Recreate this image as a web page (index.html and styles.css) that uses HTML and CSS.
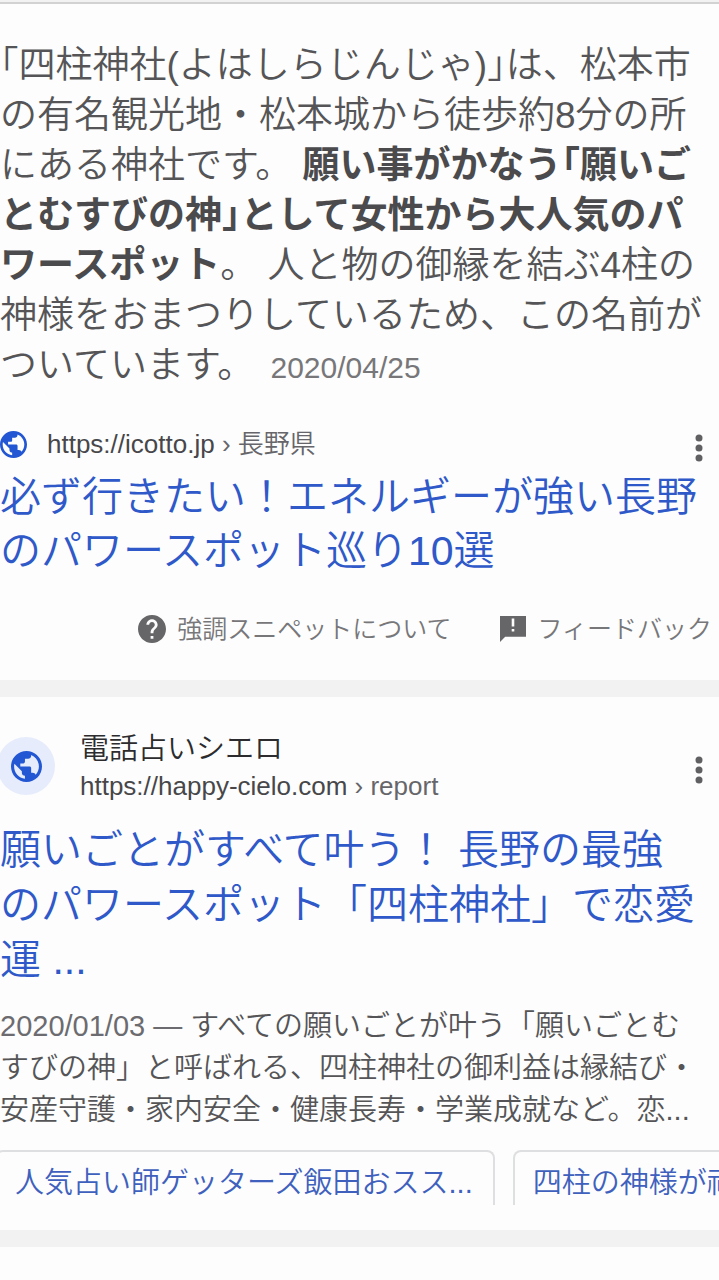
FILE: index.html
```
<!DOCTYPE html>
<html lang="ja">
<head>
<meta charset="utf-8">
<meta name="viewport" content="width=device-width">
<title>四柱神社</title>
<link rel="stylesheet" href="styles.css">
</head>
<body>
<svg class="defs" aria-hidden="true">
  <symbol id="globe" viewBox="2 2 20 20"><path d="M12 2C6.48 2 2 6.48 2 12s4.48 10 10 10 10-4.48 10-10S17.52 2 12 2zm-1 17.93c-3.95-.49-7-3.85-7-7.93 0-.62.08-1.21.21-1.79L9 15v1c0 1.1.9 2 2 2v1.93zm6.9-2.54c-.26-.81-1-1.39-1.9-1.39h-1v-3c0-.55-.45-1-1-1H8v-2h2c.55 0 1-.45 1-1V7h2c1.1 0 2-.9 2-2v-.41c2.93 1.19 5 4.06 5 7.41 0 2.08-.8 3.97-2.1 5.39z"/></symbol>
  <symbol id="dots" viewBox="0 0 8 28"><circle cx="4" cy="4" r="3.5"/><circle cx="4" cy="14" r="3.5"/><circle cx="4" cy="24" r="3.5"/></symbol>
</svg>
<main>
  <section class="card featured">
    <p class="answer"><span class="half">「</span>四柱神社(よはしらじんじゃ)<span class="half">」</span>は、松本市<br>の有名観光地・松本城から徒歩約8分の所<br>にある神社です。 <b>願い事がかなう<span class="half">「</span>願いご<br>とむすびの神<span class="half">」</span>として女性から大人気のパ<br>ワースポット</b>。 人と物の御縁を結ぶ4柱の<br>神様をおまつりしているため、この名前が<br>ついています。 <time class="date">2020/04/25</time></p>
    <div class="source">
      <svg class="globe"><use href="#globe"/></svg>
      <cite class="url">https://icotto.jp <span>› 長野県</span></cite>
      <button class="more" aria-label="詳細"><svg><use href="#dots"/></svg></button>
    </div>
    <h3 class="title"><a href="#">必ず行きたい！エネルギーが強い長野<br>のパワースポット巡り10選</a></h3>
    <div class="notes">
      <a href="#"><svg class="help" viewBox="2 2 20 20"><path d="M12 2C6.48 2 2 6.48 2 12s4.48 10 10 10 10-4.48 10-10S17.52 2 12 2zm1 17h-2v-2h2v2zm2.07-7.75l-.9.92C13.45 12.9 13 13.5 13 15h-2v-.5c0-1.1.45-2.1 1.17-2.83l1.24-1.26c.37-.36.59-.86.59-1.41 0-1.1-.9-2-2-2s-2 .9-2 2H8c0-2.21 1.79-4 4-4s4 1.79 4 4c0 .88-.36 1.68-.93 2.25z"/></svg>強調スニペットについて</a>
      <a href="#"><svg class="flag" viewBox="2 2 20 20"><path d="M22 2H2v20l4-4h16V2zm-9 12h-2v-2h2v2zm0-4h-2V4h2v6z"/></svg>フィードバック</a>
    </div>
  </section>
  <section class="card result">
    <div class="site">
      <span class="badge"><svg><use href="#globe"/></svg></span>
      <div class="names">
        <div class="name">電話占いシエロ</div>
        <cite class="url">https://happy-cielo.com <span>› report</span></cite>
      </div>
      <button class="more" aria-label="詳細"><svg><use href="#dots"/></svg></button>
    </div>
    <h3 class="title"><a href="#">願いごとがすべて叶う！ 長野の最強<br>のパワースポット「四柱神社」で恋愛<br>運 ...</a></h3>
    <p class="snippet"><time class="day">2020/01/03 — </time>すべての願いごとが叶う「願いごとむ<br>すびの神」と呼ばれる、四柱神社の御利益は縁結び・<br>安産守護・家内安全・健康長寿・学業成就など。恋...</p>
    <div class="chips">
      <a class="chip" href="#">人気占い師ゲッターズ飯田おスス...</a>
      <a class="chip" href="#">四柱の神様が祀</a>
    </div>
  </section>
  <section class="card next"></section>
</main>
</body>
</html>
```
FILE: styles.css
```
* { box-sizing: border-box; }
body {
  margin: 0;
  background: #f2f2f2;
  color: #555557;
  font-family: "Liberation Sans", "Noto Sans CJK JP", sans-serif;
  font-weight: 350;
  text-spacing-trim: space-all;
  overflow-x: hidden;
}
main { display: flex; flex-direction: column; gap: 17px; overflow: hidden; }
p, h3 { margin: 0; font-weight: 350; white-space: nowrap; }
a { color: inherit; text-decoration: none; }
cite { font-style: normal; }
svg { display: block; fill: currentColor; flex: none; }
.defs { position: absolute; width: 0; height: 0; }
.card { background: #fdfdfd; }

.featured {
  border-top: 2px solid #f2f2f2;
  box-shadow: inset 0 2px #d2d2d2;
  padding: 39px 0 32px;
}
.answer { font-size: 37px; line-height: 50px; }
.answer b { font-weight: 700; color: #4b4b4d; }
.half { font-feature-settings: "halt"; }
.date { margin-left: 6px; font-size: 30px; color: #77777a; }

.source { display: flex; align-items: center; height: 34px; margin-top: 34px; padding-right: 16px; }
.globe { width: 27px; height: 27px; margin-right: 20px; color: #2356d2; }
.url { flex: 1; font-size: 26px; line-height: 34px; white-space: nowrap; color: #47474a; }
.url span { color: #66666a; }
.more { border: 0; padding: 8px 0 0; background: none; color: #606063; }
.more svg { width: 8px; height: 28px; }

.title { font-size: 41px; line-height: 54px; color: #2f59c9; }
.featured .title { margin-top: 9px; }

.notes { display: flex; justify-content: flex-end; gap: 49px; margin-top: 32px; padding-right: 7px; font-size: 25px; line-height: 38px; color: #77777a; white-space: nowrap; }
.notes a { display: flex; align-items: center; }
.notes svg { color: #666668; }
.help { width: 28px; height: 28px; margin-right: 11px; }
.flag { width: 26px; height: 26px; margin-right: 11px; }

.result { padding: 32px 0 25px; }
.site { display: flex; align-items: center; padding-right: 16px; margin-left: -3px; }
.badge { display: grid; place-items: center; width: 58px; height: 58px; margin-right: 25px; border-radius: 50%; background: #e6ecfb; color: #2356d2; }
.badge svg { width: 31px; height: 31px; }
.names { flex: 1; }
.name { font-size: 29px; line-height: 40px; color: #2c2c2e; }
.names .url { display: block; }
.result .title { margin-top: 20px; line-height: 55px; }
.snippet { margin-top: 17px; font-size: 29px; line-height: 42px; }
.day { color: #6c6c70; }
.chips { display: flex; gap: 18px; margin: 19px 0 0 -5px; }
.chip {
  flex: none;
  height: 55px;
  padding: 0 20px 0 18px;
  border: 2px solid #dedfe1;
  border-bottom: 0;
  border-radius: 8px 8px 0 0;
  font-size: 29px;
  line-height: 62px;
  color: #3f61bd;
  white-space: nowrap;
}
.next { min-height: 40px; }
```
